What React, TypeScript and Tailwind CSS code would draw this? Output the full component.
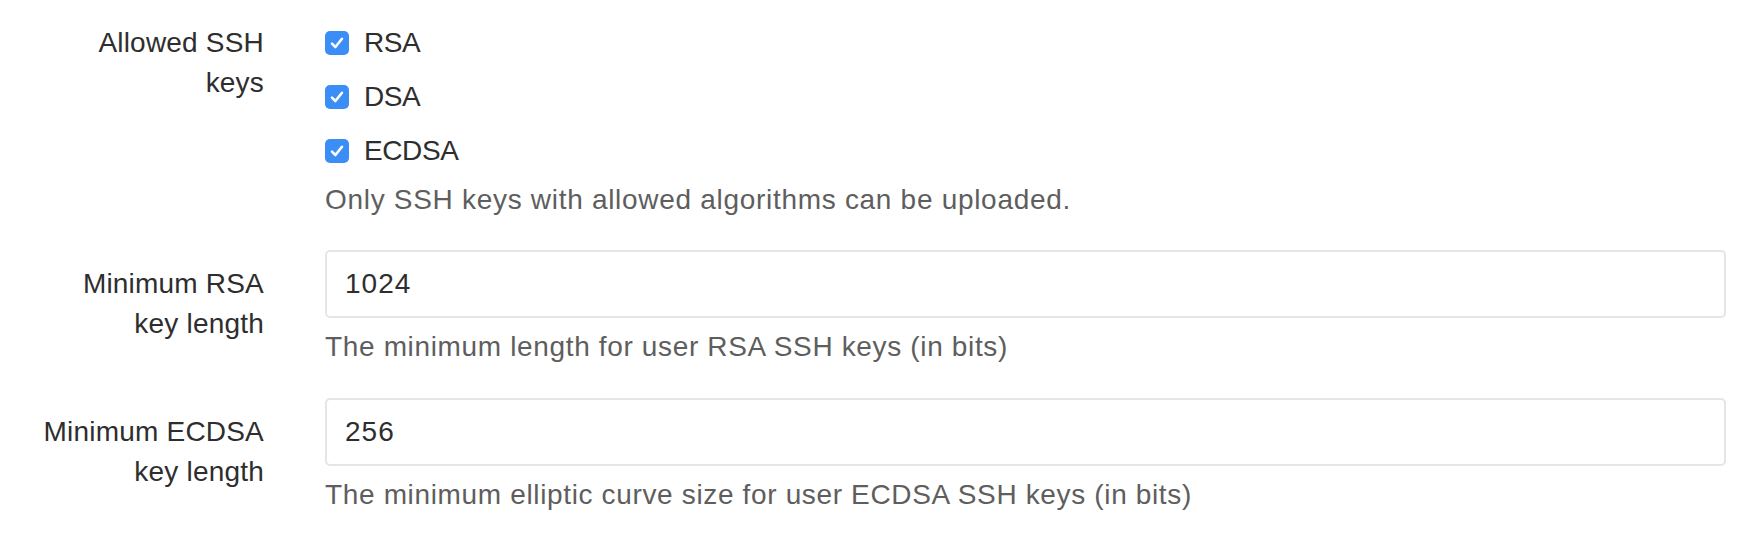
import { useState } from "react";

const font = { fontFamily: '"Liberation Sans", Arial, sans-serif' };

function Check({ label }: { label: string }) {
  const [on, setOn] = useState(true);
  return (
    <label className="flex h-[40px] cursor-pointer items-center" onClick={() => setOn((v) => !v)}>
      <span
        className={
          "flex h-[24px] w-[24px] items-center justify-center rounded-[5px] " +
          (on ? "bg-[#3b8ef6]" : "border-2 border-[#c8c8c8] bg-white")
        }
      >
        {on && (
          <svg width="16" height="16" viewBox="0 0 16 16" fill="none">
            <path d="M3 8.6 L6.4 12 L13 3.8" stroke="white" strokeWidth="2.6" strokeLinecap="round" strokeLinejoin="round" />
          </svg>
        )}
      </span>
      <span className="ml-[15px] tracking-[-0.4px]">{label}</span>
    </label>
  );
}

function Row({ label, children, last }: { label: React.ReactNode; children: React.ReactNode; last?: string }) {
  return (
    <div className={"flex " + (last ?? "")}>
      <div className="w-[264px] shrink-0 pt-[14px] text-right tracking-[0.2px]">{label}</div>
      <div className="ml-[61px] mr-[30px] flex-1">{children}</div>
    </div>
  );
}

export default function App() {
  const [rsa, setRsa] = useState("1024");
  const [ecdsa, setEcdsa] = useState("256");

  return (
    <div className="min-h-screen bg-white pt-[9px] text-[28px] leading-[40px] text-[#2e2e2e]" style={font}>
      {/* Povolené klíče */}
      <Row
        label={
          <>
            Allowed SSH
            <br />
            keys
          </>
        }
        last="mb-[30px]"
      >
        <div className="flex flex-col gap-[14px] pt-[14px]">
          <Check label="RSA" />
          <Check label="DSA" />
          <Check label="ECDSA" />
        </div>
        <p className="mt-[9px] tracking-[0.7px] text-[#5e5e5e]">Only SSH keys with allowed algorithms can be uploaded.</p>
      </Row>

      {/* RSA */}
      <Row
        label={
          <>
            Minimum RSA
            <br />
            key length
          </>
        }
        last="mb-[31px]"
      >
        <input
          value={rsa}
          onChange={(e) => setRsa(e.target.value)}
          className="block h-[68px] w-full rounded-[5px] border-2 border-[#e5e5e5] px-[18px] text-[28px] tracking-[1px] text-[#2e2e2e] outline-none"
          style={font}
        />
        <p className="mt-[9px] tracking-[0.65px] text-[#5e5e5e]">The minimum length for user RSA SSH keys (in bits)</p>
      </Row>

      {/* ECDSA */}
      <Row
        label={
          <>
            Minimum ECDSA
            <br />
            key length
          </>
        }
      >
        <input
          value={ecdsa}
          onChange={(e) => setEcdsa(e.target.value)}
          className="block h-[68px] w-full rounded-[5px] border-2 border-[#e5e5e5] px-[18px] text-[28px] tracking-[1px] text-[#2e2e2e] outline-none"
          style={font}
        />
        <p className="mt-[9px] tracking-[0.65px] text-[#5e5e5e]">The minimum elliptic curve size for user ECDSA SSH keys (in bits)</p>
      </Row>
    </div>
  );
}
